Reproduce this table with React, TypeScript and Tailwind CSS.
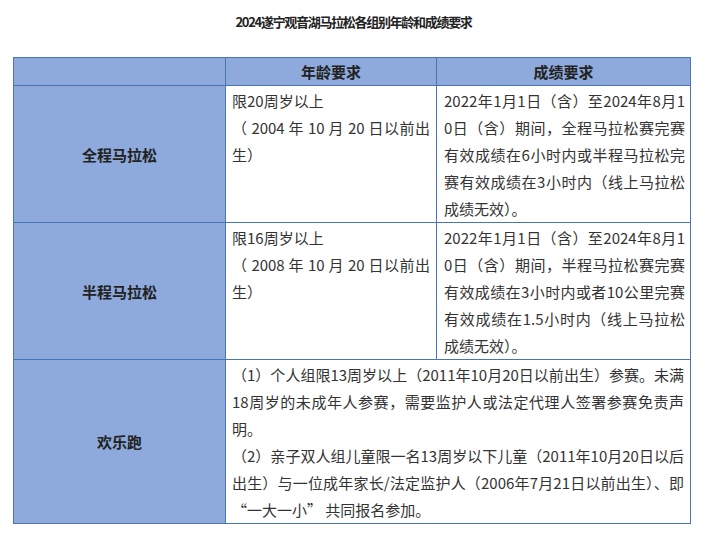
const font = { fontFamily: '"Noto Sans CJK SC", "Liberation Sans", sans-serif' };

type Row = {
  label: string;
  age?: string[];
  result?: string;
  text?: string[];
};

const rows: Row[] = [
  {
    label: "全程马拉松",
    age: ["限20周岁以上", "（ 2004 年 10 月 20 日以前出生）"],
    result:
      "2022年1月1日（含）至2024年8月10日（含）期间，全程马拉松赛完赛有效成绩在6小时内或半程马拉松完赛有效成绩在3小时内（线上马拉松成绩无效）。",
  },
  {
    label: "半程马拉松",
    age: ["限16周岁以上", "（ 2008 年 10 月 20 日以前出生）"],
    result:
      "2022年1月1日（含）至2024年8月10日（含）期间，半程马拉松赛完赛有效成绩在3小时内或者10公里完赛有效成绩在1.5小时内（线上马拉松成绩无效）。",
  },
  {
    label: "欢乐跑",
    text: [
      "（1）个人组限13周岁以上（2011年10月20日以前出生）参赛。未满18周岁的未成年人参赛，需要监护人或法定代理人签署参赛免责声明。",
      "（2）亲子双人组儿童限一名13周岁以下儿童（2011年10月20日以后出生）与一位成年家长/法定监护人（2006年7月21日以前出生）、即 “一大一小” 共同报名参加。",
    ],
  },
];

export default function App() {
  return (
    <div className="w-[707px] h-[541px] bg-white text-[#333]" style={font}>
      <h1 className="pt-[12px] h-[57px] text-center text-[13px] font-bold tracking-[-1.3px] text-[#222]">
        2024遂宁观音湖马拉松各组别年龄和成绩要求
      </h1>

      <table className="ml-[13px] w-[677px] border-collapse table-fixed text-[15px] leading-[27px]">
        <colgroup>
          <col className="w-[212px]" />
          <col className="w-[211px]" />
          <col className="w-[254px]" />
        </colgroup>
        <thead>
          <tr className="h-[28px] bg-[#8eaadc]">
            <th className="border border-[#4a74b4]" />
            <th className="border border-[#4a74b4] font-bold text-[#222]">年龄要求</th>
            <th className="border border-[#4a74b4] font-bold text-[#222]">成绩要求</th>
          </tr>
        </thead>
        <tbody>
          {rows.map((row) => (
            <tr key={row.label}>
              <td className="border border-[#4a74b4] bg-[#8eaadc] text-center align-middle font-bold text-[#222]">
                {row.label}
              </td>
              {row.text ? (
                <td colSpan={2} className="border border-[#4a74b4] align-top px-[6px] pt-[1px] text-justify break-all">
                  {row.text.map((t) => (
                    <p key={t}>{t}</p>
                  ))}
                </td>
              ) : (
                <>
                  <td className="border border-[#4a74b4] align-top px-[6px] pt-[1px] text-justify">
                    {row.age!.map((t) => (
                      <p key={t}>{t}</p>
                    ))}
                  </td>
                  <td className="border border-[#4a74b4] align-top pl-[7px] pr-[5px] pt-[1px] text-justify break-all">
                    {row.result}
                  </td>
                </>
              )}
            </tr>
          ))}
        </tbody>
      </table>
    </div>
  );
}
